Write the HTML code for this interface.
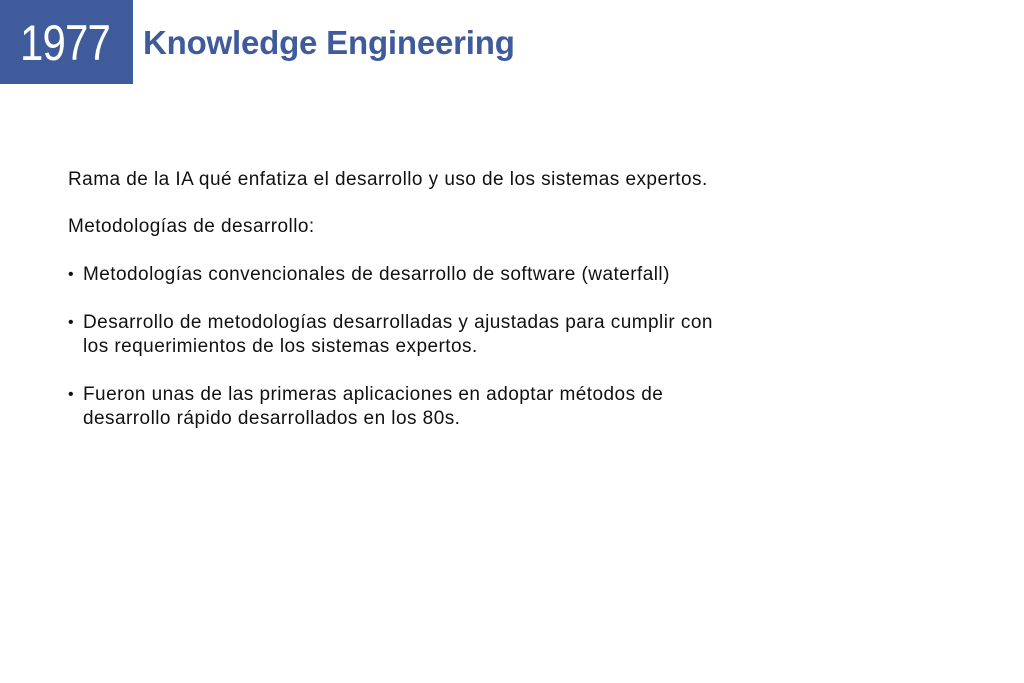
<html><head><style>
body{margin:0;width:1024px;height:683px;background:#fff;position:relative;font-family:"Liberation Sans",sans-serif;overflow:hidden}
.box{position:absolute;left:0;top:0;width:133px;height:84px;background:#3f5b9b}
.yr{position:absolute;left:20px;top:14px;color:#fff;font-size:50px;transform:scaleX(0.84);transform-origin:left;letter-spacing:-1px}
.t{position:absolute;left:143px;top:24px;color:#3f5b9b;font-size:33px;font-weight:bold;letter-spacing:-0.2px}
.p{position:absolute;left:68px;font-size:19px;letter-spacing:0.45px;color:#111;line-height:24px;white-space:nowrap}
.b{left:68px;padding-left:15px}
.b:before{content:"•";position:absolute;left:0;font-size:16px}
</style></head><body>
<div class="box"></div><div class="yr">1977</div>
<div class="t">Knowledge Engineering</div>
<div class="p" style="top:168px">Rama de la IA qué enfatiza el desarrollo y uso de los sistemas expertos.</div>
<div class="p" style="top:215px">Metodologías de desarrollo:</div>
<div class="p b" style="top:263px">Metodologías convencionales de desarrollo de software (waterfall)</div>
<div class="p b" style="top:311px">Desarrollo de metodologías desarrolladas y ajustadas para cumplir con<br>los requerimientos de los sistemas expertos.</div>
<div class="p b" style="top:383px">Fueron unas de las primeras aplicaciones en adoptar métodos de<br>desarrollo rápido desarrollados en los 80s.</div>
</body></html>
